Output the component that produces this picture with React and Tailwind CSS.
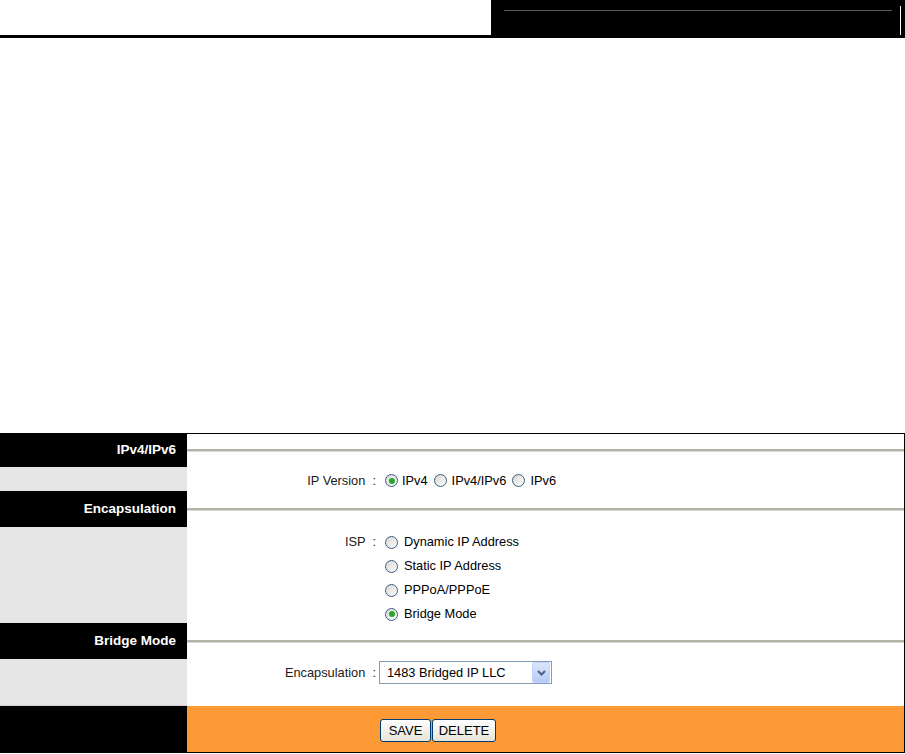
import React from 'react';

// Radio estilo Windows XP
const Radio = ({ checked }) => (
    <span className="inline-flex items-center justify-center w-[13px] h-[13px] rounded-full border border-[#3c5d80] bg-linear-to-br from-[#d6d6d0] to-white shrink-0">
        {checked && <span className="w-[6px] h-[6px] rounded-full bg-[#2aa52a]" />}
    </span>
);

const Line = () => (
    <div className="w-full h-[3px] border-t-2 border-b border-t-[#b4b1a5] border-b-[#dcd9d0]" />
);

const HeaderRow = ({ label, h }) => (
    <>
        <div className={`${h} bg-black flex items-center justify-end pr-[11px] text-white font-bold text-[13.5px]`}>
            {label}
        </div>
        <div className={`${h} bg-white flex items-center`}>
            <Line />
        </div>
    </>
);

const Label = ({ children }) => (
    <div className="w-[191px] shrink-0 text-right pr-[2px] whitespace-pre text-[#1a1a1a]">{children}</div>
);

export default function App() {
    return (
        <div className="w-[905px] h-[754px] bg-white text-black font-['Liberation_Sans',Arial,sans-serif] text-[12.8px] overflow-hidden">
            {/* barra superior */}
            <div className="flex h-[38px]">
                <div className="w-[491px] border-b-[3px] border-black" />
                <div className="flex-1 bg-black flex items-start pl-[13px]">
                    <div className="w-[388px] h-px mt-[10px] bg-[#5a5a5a]" />
                    <div className="w-px h-[29px] mt-[6px] ml-[8px] bg-white" />
                </div>
            </div>

            <div className="mt-[395px] w-[905px] border-t border-r border-black grid grid-cols-[187px_1fr]">
                <HeaderRow label="IPv4/IPv6" h="h-[33px]" />
                <div className="h-[24px] bg-[#e6e6e6]" />
                <div className="h-[24px] flex items-center pt-[3px]">
                    <Label>IP Version  :</Label>
                    <div className="flex items-center ml-[7px]">
                        <Radio checked />
                        <span className="ml-[4px] mr-[6px]">IPv4</span>
                        <Radio />
                        <span className="ml-[5px] mr-[6px]">IPv4/IPv6</span>
                        <Radio />
                        <span className="ml-[5px]">IPv6</span>
                    </div>
                </div>

                <HeaderRow label="Encapsulation" h="h-[36px]" />
                <div className="h-[96px] bg-[#e6e6e6]" />
                <div className="h-[96px] flex items-start pt-[3px]">
                    <div className="h-[24px] flex items-center">
                        <Label>ISP  :</Label>
                    </div>
                    <div className="flex flex-col ml-[7px]">
                        {['Dynamic IP Address', 'Static IP Address', 'PPPoA/PPPoE', 'Bridge Mode'].map((t) => (
                            <div key={t} className="h-[24px] flex items-center">
                                <Radio checked={t === 'Bridge Mode'} />
                                <span className="ml-[6px]">{t}</span>
                            </div>
                        ))}
                    </div>
                </div>

                <HeaderRow label="Bridge Mode" h="h-[36px]" />
                <div className="h-[47px] bg-[#e6e6e6] border-b border-[#d0d0d0]" />
                <div className="h-[47px] flex items-start pt-[2px]">
                    <div className="h-[23px] flex items-center">
                        <Label>Encapsulation  :</Label>
                    </div>
                    <div className="ml-[1px] w-[173px] h-[23px] border border-[#7f9db9] bg-white flex items-center">
                        <span className="flex-1 pl-[7px]">1483 Bridged IP LLC</span>
                        <div className="w-[18px] h-[21px] mr-px rounded-[2px] bg-linear-to-b from-[#dce6fb] to-[#b6cbf6] border border-[#c3d3fd] flex items-center justify-center">
                            <svg width="9" height="6" viewBox="0 0 9 6">
                                <path d="M1 1 L4.5 4.5 L8 1" stroke="#4d6185" strokeWidth="2" fill="none" />
                            </svg>
                        </div>
                    </div>
                </div>

                <div className="h-[47px] bg-black border-b border-black" />
                <div className="h-[47px] bg-[#fd9a36] border-b border-black flex items-start pt-[13px]">
                    <div className="ml-[193px] flex gap-px">
                        <button className="w-[51px] h-[23px] rounded-[3px] border border-[#003c74] bg-linear-to-b from-white to-[#e6e3d6] text-[13px] text-black">
                            SAVE
                        </button>
                        <button className="w-[64px] h-[23px] rounded-[3px] border border-[#003c74] bg-linear-to-b from-white to-[#e6e3d6] text-[13px] text-black">
                            DELETE
                        </button>
                    </div>
                </div>
            </div>
        </div>
    );
}
